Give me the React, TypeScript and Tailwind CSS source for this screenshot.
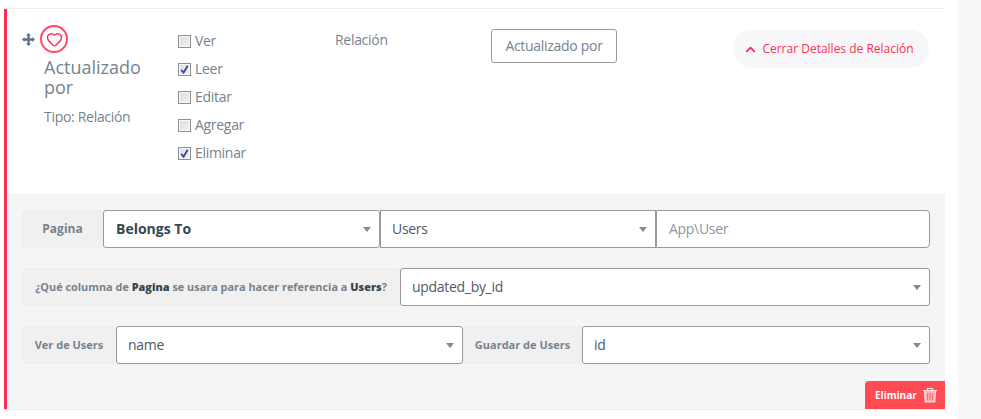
import { ChevronUp, Heart } from "lucide-react";

const permissions = [
	{ label: "Ver", checked: false },
	{ label: "Leer", checked: true },
	{ label: "Editar", checked: false },
	{ label: "Agregar", checked: false },
	{ label: "Eliminar", checked: true },
];

export default function App() {
	return (
		<div className="flex h-[419px] w-[981px] overflow-hidden bg-white font-['Open_Sans',sans-serif] text-[#76838f]">
			<div className="w-[958px] shrink-0 pl-1 pr-[13px] pt-2">
				<div className="border-y border-[#eeeeee]">
					<div className="border-l-[3px] border-[#ff2d55]">
						<TopSection />
						<div className="border-t border-[#eeeeee] bg-[#f4f5f7] pl-[15px] pt-[15px]">
							<div className="flex h-[38px] w-[908px]">
								<Label className="w-[81px] text-xs">Pagina</Label>
								<Select className="w-[277px] pl-[12px] font-bold tracking-normal text-[#37474f]" value="Belongs To" />
								<Select className="w-[276px] rounded-none" value="Users" />
								<div className="flex w-[274px] items-center rounded-r border border-[#999999] bg-white pl-[12px] text-sm tracking-[-0.3px] text-[#8a96a3]">
									App\User
								</div>
							</div>
							<div className="mt-5 flex h-[38px] w-[908px]">
								<Label className="w-[378px] text-[10.9px]">
									<span>
										¿Qué columna de <b className="text-[#37474f]">Pagina</b> se usara para hacer referencia a{" "}
										<b className="text-[#37474f]">Users</b>?
									</span>
								</Label>
								<Select className="flex-1" value="updated_by_id" />
							</div>
							<div className="mt-5 flex h-[38px] w-[908px]">
								<Label className="w-[94px] text-[11px]">Ver de Users</Label>
								<Select className="w-[347px]" value="name" />
								<Label className="w-[119px] rounded-none text-[11px]">Guardar de Users</Label>
								<Select className="flex-1" value="id" />
							</div>
							<div className="mt-[17px] flex justify-end">
								<button className="flex h-[28px] w-[80px] items-center rounded-tl bg-[#ff4c52] pl-[10px] text-[10px] font-bold text-white">
									Eliminar
									<TrashIcon />
								</button>
							</div>
						</div>
					</div>
				</div>
			</div>
			<div className="flex-1 bg-[#f8f8f8]" />
		</div>
	);
}

function TopSection() {
	return (
		<div className="flex h-[185px] text-sm tracking-[-0.3px]">
			<div className="w-[171px] pl-[15px] pt-4">
				<div className="flex items-center gap-[5px]">
					<MoveIcon />
					<div className="flex size-7 items-center justify-center rounded-full border-2 border-[#ff4c62]">
						<Heart className="size-[17px] text-[#ff2d55]" strokeWidth={2} />
					</div>
				</div>
				<h3 className="ml-[22px] mt-[4px] w-[110px] text-lg leading-[20px] font-medium tracking-normal text-[#76838f]">
					Actualizado por
				</h3>
				<p className="ml-[22px] mt-[10px]">Tipo: Relación</p>
			</div>
			<div className="w-[157px] pt-[18px]">
				{permissions.map((p) => (
					<Permission key={p.label} label={p.label} checked={p.checked} />
				))}
			</div>
			<div className="w-[156px] pt-[21px]">Relación</div>
			<div className="w-[242px] pt-5">
				<div className="flex h-[34px] w-[126px] items-center justify-center rounded-[3px] border border-[#999999]">
					Actualizado por
				</div>
			</div>
			<div className="pt-[21px]">
				<div className="flex h-[38px] w-[196px] items-center justify-center gap-[4px] rounded-full bg-[#f7f7fa] pr-[5px] text-xs tracking-normal text-[#ff2d55]">
					<ChevronUp className="size-[15px]" strokeWidth={3} />
					Cerrar Detalles de Relación
				</div>
			</div>
		</div>
	);
}

function Permission({ label, checked }: { label: string; checked: boolean }) {
	return (
		<div className="flex h-[28px] items-center gap-[4px]">
			<span className="flex size-[13px] items-center justify-center border border-[#8e8f8f] bg-gradient-to-br from-[#dcdcdc] to-[#f2f2f2] shadow-[inset_0_0_0_1px_#f8f8f8]">
				{checked && (
					<svg viewBox="0 0 12 12" className="size-[11px]">
						<path d="M2.5 6.5 5 9.5 9.5 2" fill="none" stroke="#3a4796" strokeWidth="2" />
					</svg>
				)}
			</span>
			{label}
		</div>
	);
}

function Label({ className, children }: { className: string; children: React.ReactNode }) {
	return (
		<div
			className={`flex shrink-0 items-center justify-center rounded-l border border-[#eeeeee] bg-[#f0f0f0] font-bold whitespace-nowrap text-[#76838f] ${className}`}
		>
			{children}
		</div>
	);
}

function Select({ className, value }: { className: string; value: string }) {
	return (
		<div
			className={`flex items-center justify-between rounded-[3px] border border-[#999999] bg-white pl-[11px] pr-[8px] text-sm tracking-[-0.3px] text-[#4f5b66] ${className}`}
		>
			{value}
			<span className="border-x-[4px] border-t-[5px] border-x-transparent border-t-[#888888]" />
		</div>
	);
}

function MoveIcon() {
	return (
		<svg viewBox="0 0 13 13" className="size-[13px]" fill="#5f7287">
			<path d="M6.5 0 9 2.6H7.7V5.3H10.4V4L13 6.5 10.4 9V7.7H7.7V10.4H9L6.5 13 4 10.4H5.3V7.7H2.6V9L0 6.5 2.6 4V5.3H5.3V2.6H4Z" />
		</svg>
	);
}

function TrashIcon() {
	return (
		<svg viewBox="0 0 16 16" className="ml-[5px] size-[16px]" fill="none" stroke="#ffe3e5" strokeWidth="1.2">
			<path d="M2.5 3.5l.7 11.5h9.6l.7-11.5z" fill="#ffb3b8" />
			<path d="M1 3.5h14M5.5 3.5V1.5h5v2" />
			<path d="M5.5 6v7M8 6v7M10.5 6v7" stroke="#ff6d74" />
		</svg>
	);
}
